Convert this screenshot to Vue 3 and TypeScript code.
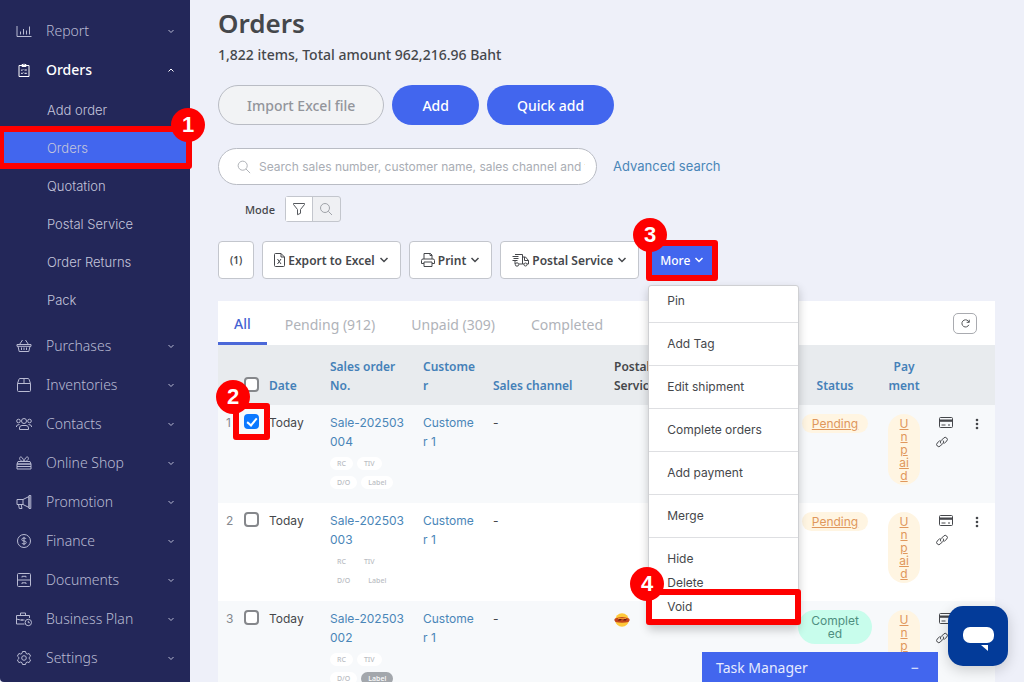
<script setup lang="ts">
import { ref } from 'vue'

interface NavItem {
  label: string
  icon: string
  open?: boolean
  children?: string[]
}

interface OrderRow {
  no: number
  date: string
  order: string
  customer: string
  channel: string
  courier: boolean
  status: string
  done: boolean
  payment: string
  labelled: boolean
}

const nav: NavItem[] = [
  { label: 'Report', icon: 'M1 3v10.500h14.500M4.500 11.500V8.500M7.500 11.500V6M10.500 11.500V7.500M13.500 11.500V3.500' },
  {
    label: 'Orders',
    icon: 'M3 3.500h10v11H3zM6 4.500V2.500h1.200a.9.9 0 0 1 1.600 0H10v2zM5.200 7.800l.8.8 1.200-1.300M8.500 8h2.300M5.200 11l.8.8 1.200-1.300M8.500 11.300h2.300',
    open: true,
    children: ['Add order', 'Orders', 'Quotation', 'Postal Service', 'Order Returns', 'Pack'],
  },
  { label: 'Purchases', icon: 'M1 6.500h14v1.800H1zM2 8.300l1.200 5.200h9.600L14 8.300M3.500 6.500L6.500 2M12.500 6.500L9.500 2M5.500 9.500v2.500M8 9.500v2.500M10.500 9.500v2.500' },
  { label: 'Inventories', icon: 'M1.500 6.500h13v7a1 1 0 0 1-1 1h-11a1 1 0 0 1-1-1zM1.500 6.500L3 2.200Q3.200 1.500 4 1.500h8q.8 0 1 .7l1.500 4.300M8 1.500v5' },
  { label: 'Contacts', icon: 'M8 7.500a2.500 2.500 0 1 0 0-5 2.500 2.500 0 0 0 0 5zM3.500 13.500v-1.500Q3.500 9.500 6 9.500h4q2.500 0 2.500 2.500v1.500zM2.500 6.800a1.800 1.800 0 1 0 0-3.600 1.800 1.800 0 0 0 0 3.600zM13.500 6.800a1.800 1.800 0 1 0 0-3.600 1.800 1.800 0 0 0 0 3.600zM.3 11Q.3 8.500 3.500 8.500M15.700 11q0-2.500-3.200-2.500' },
  { label: 'Online Shop', icon: 'M2 6.500h12l1 2.500H1zM1 9h14v5H1zM1 11.500h14M8 6.500C3 6.500 2.500 1.500 5.200 2 7 2.500 8 6.500 8 6.500S9 2.500 10.800 2C13.500 1.500 13 6.500 8 6.500z' },
  { label: 'Promotion', icon: 'M1 5.500h6v5H1zM7 5.500L13 2.500v11l-6-3M13 1.500h1.800v13H13zM2.500 10.500l.8 4h2.700l-.8-4' },
  { label: 'Finance', icon: 'M8 14.500a6.500 6.500 0 1 0 0-13 6.500 6.500 0 0 0 0 13zM10.200 6Q9.800 5 8 5 5.800 5 5.800 6.500T8 8t2.200 1.500T8 11Q6.200 11 5.800 10M8 3.800v8.400' },
  { label: 'Documents', icon: 'M1.500 2.500a1 1 0 0 1 1-1h11a1 1 0 0 1 1 1v11a1 1 0 0 1-1 1h-11a1 1 0 0 1-1-1zM1.500 8h13M6 5.500V4.300h4v1.200M6 12v-1.200h4V12' },
  { label: 'Business Plan', icon: 'M8.500 13H.5V4.500h13V7M.5 8q4 1.500 8 1M4.500 4.500V2h5v2.500M12.300 14.700a3.200 3.200 0 1 0 0-6.400 3.200 3.200 0 0 0 0 6.400zM12.300 9.800v1.900h1.500M6 8v2' },
  { label: 'Settings', icon: 'M6.500 1.500h3l.5 1.900 1.200.7 1.900-.6 1.500 2.600-1.400 1.300v1.300l1.400 1.300-1.500 2.600-1.900-.6-1.200.7-.5 1.800h-3L6 12.700 4.800 12l-1.900.6L1.400 10l1.400-1.300V7.400L1.400 6.100l1.500-2.600 1.900.6L6 3.400zM8 10.300a2.300 2.300 0 1 0 0-4.600 2.300 2.300 0 0 0 0 4.600z' },
]

const tabs: string[] = ['All', 'Pending (912)', 'Unpaid (309)', 'Completed']

const menuGroups: string[][] = [
  ['Pin'], ['Add Tag'], ['Edit shipment'], ['Complete orders'], ['Add payment'], ['Merge'],
  ['Hide', 'Delete', 'Void'],
]

const rows: OrderRow[] = [
  { no: 1, date: 'Today', order: 'Sale-202503\n004', customer: 'Custome\nr 1', channel: '-', courier: false, status: 'Pending', done: false, payment: 'U\nn\np\nai\nd', labelled: false },
  { no: 2, date: 'Today', order: 'Sale-202503\n003', customer: 'Custome\nr 1', channel: '-', courier: false, status: 'Pending', done: false, payment: 'U\nn\np\nai\nd', labelled: false },
  { no: 3, date: 'Today', order: 'Sale-202503\n002', customer: 'Custome\nr 1', channel: '-', courier: true, status: 'Complet\ned', done: true, payment: 'U\nn\np\nai\nd', labelled: true },
]

const selected = ref<number[]>([1])
const query = ref('')
</script>

<template>
  <div class="app">
    <nav class="sidebar" aria-label="Main">
      <div v-for="item in nav" :key="item.label">
        <button type="button" class="nav-item" :class="{ open: item.open }">
          <svg class="nav-icon" viewBox="0 0 16 16" aria-hidden="true"><path :d="item.icon" /></svg>
          <span class="nav-label">{{ item.label }}</span>
          <svg class="nav-chevron" viewBox="0 0 8 8" aria-hidden="true">
            <path :d="item.open ? 'M1.500 5.500L4 3l2.500 2.500' : 'M1.500 3L4 5.500 6.500 3'" />
          </svg>
        </button>
        <ul v-if="item.children" class="subnav">
          <li v-for="child in item.children" :key="child" :class="{ current: child === 'Orders' }">
            <a href="#">{{ child }}</a>
            <template v-if="child === 'Orders'">
              <span class="frame frame-nav"></span>
              <span class="step step-nav">1</span>
            </template>
          </li>
        </ul>
      </div>
    </nav>

    <main class="content">
      <h1>Orders</h1>
      <p class="summary">1,822 items, Total amount 962,216.96 Baht</p>

      <div class="actions">
        <button type="button" class="pill ghost">Import Excel file</button>
        <button type="button" class="pill">Add</button>
        <button type="button" class="pill">Quick add</button>
      </div>

      <div class="search-row">
        <label class="search">
          <svg class="glass" viewBox="0 0 16 16" aria-hidden="true"><circle cx="6.500" cy="6.500" r="5.200" /><path d="M10.300 10.300L15 15" /></svg>
          <input v-model="query" type="text" aria-label="Search orders" placeholder="Search sales number, customer name, sales channel and tags" />
        </label>
        <a href="#" class="advanced">Advanced search</a>
      </div>

      <div class="mode">
        <span class="mode-label">Mode</span>
        <div class="mode-group">
          <button type="button" class="on" aria-label="Filter mode">
            <svg viewBox="0 0 14 14" aria-hidden="true"><path d="M1.500 1.500h11v1L8.500 7.500v3.800l-3 1.400V7.500L1.500 2.500z" /></svg>
          </button>
          <button type="button" aria-label="Search mode">
            <svg viewBox="0 0 14 14" aria-hidden="true"><circle cx="6" cy="6" r="4.500" /><path d="M9.300 9.300L13 13" /></svg>
          </button>
        </div>
      </div>

      <div class="toolbar">
        <button type="button" class="tool count">(1)</button>
        <button type="button" class="tool">
          <svg class="tool-icon narrow" viewBox="0 0 11 14" aria-hidden="true"><path d="M.5 1.500a1 1 0 0 1 1-1H7L10.500 4v8.500a1 1 0 0 1-1 1h-8a1 1 0 0 1-1-1zM7 .5V4h3.500M3.500 6l3.500 5M7 6l-3.500 5" /></svg>
          <span>Export to Excel</span>
          <svg class="caret" viewBox="0 0 10 8" aria-hidden="true"><path d="M1.500 2L5 5.500 8.500 2" /></svg>
        </button>
        <button type="button" class="tool">
          <svg class="tool-icon" viewBox="0 0 14 14" aria-hidden="true"><path d="M3 6V.5h6.500L11 2v4M9 .5v2h2M3 10.500H.5V7.500Q.5 6 2 6h10q1.500 0 1.500 1.500v3H11M3 9h8v4.500H3z" /></svg>
          <span>Print</span>
          <svg class="caret" viewBox="0 0 10 8" aria-hidden="true"><path d="M1.500 2L5 5.500 8.500 2" /></svg>
        </button>
        <button type="button" class="tool">
          <svg class="tool-icon wide" viewBox="0 0 17 14" aria-hidden="true"><path d="M3 1.500h7.500V11H7M10.500 4h3l3 3.500V11H15M10.500 11h1.500M.5 3.500h6M1.500 5.500h5M.5 7.500h5M3 7.500V11M12.500 4v3.500h4" /><circle cx="5" cy="11.500" r="1.700" /><circle cx="13.500" cy="11.500" r="1.500" /></svg>
          <span>Postal Service</span>
          <svg class="caret" viewBox="0 0 10 8" aria-hidden="true"><path d="M1.500 2L5 5.500 8.500 2" /></svg>
        </button>
        <div class="more">
          <button type="button" class="tool primary" aria-haspopup="menu" aria-expanded="true">
            <span>More</span>
            <svg class="caret" viewBox="0 0 10 8" aria-hidden="true"><path d="M1.500 2L5 5.500 8.500 2" /></svg>
          </button>
          <span class="frame frame-more"></span>
          <span class="step step-more">3</span>
          <div class="menu" role="menu">
            <div v-for="(group, i) in menuGroups" :key="i" class="menu-group">
              <button v-for="entry in group" :key="entry" type="button" role="menuitem" class="menu-item">
                {{ entry }}
              </button>
            </div>
            <span class="frame frame-void"></span>
            <span class="step step-void">4</span>
          </div>
        </div>
      </div>

      <section class="card">
        <div class="tabs">
          <button v-for="(tab, i) in tabs" :key="tab" type="button" class="tab" :class="{ active: i === 0 }">{{ tab }}</button>
          <button type="button" class="refresh" aria-label="Refresh">
            <svg viewBox="0 0 10 10" aria-hidden="true"><path d="M8.700 6.500A4 4 0 1 1 8 2.200L9 3.500M9.200.8v2.900H6.300" /></svg>
          </button>
        </div>
        <table>
          <colgroup>
            <col class="c-no" /><col class="c-check" /><col class="c-date" /><col class="c-order" /><col class="c-customer" />
            <col class="c-channel" /><col class="c-postal" /><col class="c-status" /><col class="c-payment" />
            <col class="c-icons" /><col class="c-dots" />
          </colgroup>
          <thead>
            <tr>
              <th></th>
              <th><input type="checkbox" aria-label="Select all orders" /></th>
              <th>Date</th>
              <th>Sales order<br />No.</th>
              <th>Custome<br />r</th>
              <th>Sales channel</th>
              <th class="dark">Postal<br />Service</th>
              <th class="mid">Status</th>
              <th class="mid">Pay<br />ment</th>
              <th></th>
              <th></th>
            </tr>
          </thead>
          <tbody>
            <tr v-for="row in rows" :key="row.no">
              <td class="no">{{ row.no }}</td>
              <td class="check">
                <input v-model="selected" type="checkbox" :value="row.no" :aria-label="'Select order ' + row.no" />
                <template v-if="row.no === 1">
                  <span class="frame frame-check"></span>
                  <span class="step step-check">2</span>
                </template>
              </td>
              <td>{{ row.date }}</td>
              <td>
                <a href="#" class="lines">{{ row.order }}</a>
                <div class="tags"><span class="tag">RC</span><span class="tag">TIV</span></div>
                <div class="tags"><span class="tag">D/O</span><span class="tag" :class="{ filled: row.labelled }">Label</span></div>
              </td>
              <td><a href="#" class="lines">{{ row.customer }}</a></td>
              <td>{{ row.channel }}</td>
              <td>
                <svg v-if="row.courier" class="courier" viewBox="0 0 16 14" role="img" aria-label="Courier">
                  <circle cx="8" cy="7" r="6.800" fill="#ffc93a" />
                  <path d="M1 5.500Q8 2.500 15 5.500l.8 1.500-1.300 2Q8 10.500 1.500 9L.2 7z" fill="#c4461c" />
                  <path d="M3.500 7.500l2-1.500h2.300L6.500 7.500zM9 7.500L10.300 6h2.500l-1 1.500z" fill="#5e1d10" />
                  <path d="M4 6h8v-.700H4z" fill="#ffb53a" />
                </svg>
              </td>
              <td class="mid"><a href="#" class="badge" :class="{ done: row.done }">{{ row.status }}</a></td>
              <td class="mid"><a href="#" class="badge tall">{{ row.payment }}</a></td>
              <td class="row-icons">
                <button type="button" class="icon-btn" aria-label="Payment">
                  <svg class="bank" viewBox="0 0 14 11" aria-hidden="true"><rect x=".5" y=".5" width="13" height="10" rx="1" /><path d="M0 2.500h14v2.300H0z" class="solid" /><path d="M2.500 8h4M9 8h2" /></svg>
                </button>
                <button type="button" class="icon-btn" aria-label="Copy link">
                  <svg class="chain" viewBox="0 0 12 12" aria-hidden="true"><path d="M5 7.500a2 2 0 0 1 0-2.800L7.700 2a2.100 2.100 0 0 1 3 0 2.100 2.100 0 0 1 0 3L8 7.700M7 4.500a2 2 0 0 1 0 2.800L4.300 10a2.100 2.100 0 0 1-3 0 2.100 2.100 0 0 1 0-3L4 4.300" /></svg>
                </button>
              </td>
              <td>
                <button type="button" class="icon-btn dots" aria-label="Row actions">
                  <svg viewBox="0 0 4 12" aria-hidden="true"><circle cx="2" cy="2" r="1.300" /><circle cx="2" cy="6" r="1.300" /><circle cx="2" cy="10" r="1.300" /></svg>
                </button>
              </td>
            </tr>
          </tbody>
        </table>
      </section>
    </main>

    <button type="button" class="tasks"><span>Task Manager</span><span>−</span></button>
    <button type="button" class="chat" aria-label="Open chat">
      <svg viewBox="0 0 60 60" aria-hidden="true">
        <rect x="15" y="21" width="31" height="16" rx="7" />
        <path d="M33 39h7v6z" />
      </svg>
    </button>
  </div>
</template>

<style>
body {
  margin: 0;
}
</style>

<style scoped>
.app {
  --blue: #4266ee;
  --link: #4a86b8;
  --red: #fe0000;
  position: relative;
  display: flex;
  height: 100vh;
  overflow: hidden;
  background: #eef0f9;
  color: #45474b;
  font-family: "Noto Sans", "Open Sans", sans-serif;
  font-size: 13px;
  line-height: 19px;
}
.app * {
  box-sizing: border-box;
}
button {
  padding: 0;
  border: 0;
  background: none;
  color: inherit;
  font: inherit;
  cursor: pointer;
}
svg {
  display: block;
  fill: none;
  stroke: currentColor;
  flex: none;
}
a {
  color: var(--link);
  text-decoration: none;
}

.sidebar {
  flex: 0 0 190px;
  padding-top: 11px;
  background: #232759;
  border-bottom-left-radius: 4px;
  color: #b9bbd3;
}
.nav-item {
  display: flex;
  align-items: center;
  width: 100%;
  height: 39px;
  padding: 0 15px 0 16px;
  font-family: "Noto Sans", sans-serif;
  font-size: 14px;
  font-weight: 300;
  text-align: left;
}
.nav-item.open {
  color: #fff;
  font-weight: 500;
}
.nav-icon {
  width: 16px;
  height: 16px;
  margin-right: 14px;
}
.nav-label {
  flex: 1;
}
.nav-chevron {
  width: 8px;
  height: 8px;
}
.subnav {
  margin: 0;
  padding: 2px 0 7px;
  list-style: none;
}
.subnav li {
  position: relative;
}
.subnav a {
  display: block;
  padding-left: 47px;
  color: #c3c5db;
  font-family: Inter, sans-serif;
  font-size: 13px;
  font-weight: 300;
  line-height: 38px;
}
.subnav .current {
  background: var(--blue);
}

.frame {
  position: absolute;
  border: 6px solid var(--red);
  border-radius: 3px;
  pointer-events: none;
}
.step {
  position: absolute;
  width: 34px;
  height: 34px;
  border-radius: 50%;
  background: var(--red);
  color: #fff;
  font: bold 22px/34px "Liberation Sans", Arial, sans-serif;
  text-align: center;
}
.frame-nav {
  inset: -3px -2px -2px;
}
.step-nav {
  top: -21px;
  right: -15px;
}
.frame-more {
  inset: -1px -1px -2px;
}
.step-more {
  top: -23px;
  left: -14px;
}
.frame-void {
  inset: auto -3px 0 -3px;
  height: 36px;
}
.step-void {
  bottom: 24px;
  left: -19px;
}
.frame-check {
  top: -2px;
  left: -11px;
  width: 37px;
  height: 37px;
}
.step-check {
  top: -25px;
  left: -28px;
}

.content {
  flex: 1;
  min-width: 0;
  padding: 5px 29px 0 28px;
}
h1 {
  margin: 0;
  font-size: 26px;
  font-weight: 600;
  line-height: 36px;
}
.summary {
  margin: 4px 0 20px;
  font-size: 14px;
  font-weight: 500;
  line-height: 20px;
}
.actions {
  display: flex;
  gap: 8px;
}
.pill {
  height: 40px;
  padding: 0 30px;
  border-radius: 20px;
  background: var(--blue);
  color: #fff;
  font-size: 14px;
  font-weight: 500;
}
.pill.ghost {
  padding: 0 28px;
  border: 1px solid #b9bcc4;
  background: #f2f3f5;
  color: #92959b;
}
.search-row {
  display: flex;
  align-items: center;
  gap: 16px;
  margin-top: 23px;
}
.search {
  display: flex;
  align-items: center;
  flex: 0 1 379px;
  height: 37px;
  padding: 0 11px 0 18px;
  border: 1px solid #b9bcc4;
  border-radius: 19px;
  background: #fff;
}
.glass {
  width: 14px;
  height: 14px;
  margin-right: 8px;
  color: #a5a8ae;
}
.search input {
  flex: 1;
  min-width: 0;
  padding: 0;
  border: 0;
  outline: 0;
  background: none;
  color: inherit;
  font: 12px/19px Inter, sans-serif;
}
.search input::placeholder {
  color: #a9adb4;
}
.advanced {
  font-family: Inter, sans-serif;
}
.mode {
  display: flex;
  align-items: center;
  gap: 10px;
  margin: 11px 0 19px 27px;
}
.mode-label {
  font-size: 11px;
  font-weight: 500;
}
.mode-group {
  display: flex;
  border: 1px solid #c3c6cd;
  border-radius: 3px;
  background: #eff0f3;
}
.mode-group button {
  display: grid;
  place-items: center;
  width: 27px;
  height: 24px;
  color: #a0a3a9;
}
.mode-group .on {
  border-right: 1px solid #c3c6cd;
  background: #fff;
  color: #55585d;
}
.mode-group svg {
  width: 14px;
  height: 14px;
}

.toolbar {
  display: flex;
  gap: 8px;
}
.tool {
  display: flex;
  align-items: center;
  gap: 3px;
  height: 38px;
  padding: 0 11px;
  border: 1px solid #c3c6cd;
  border-radius: 4px;
  background: #fff;
  font-size: 12px;
  font-weight: 600;
  white-space: nowrap;
}
.tool.count {
  font-size: 10px;
}
.tool.primary {
  border-color: var(--blue);
  background: var(--blue);
  color: #fff;
  font-weight: 500;
  padding: 0 12px;
}
.tool-icon {
  width: 14px;
  height: 14px;
}
.tool-icon.narrow {
  width: 11px;
}
.tool-icon.wide {
  width: 17px;
}
.caret {
  width: 10px;
  height: 8px;
  margin-left: 1px;
  stroke-width: 1.500;
}
.more {
  position: relative;
  z-index: 2;
}
.menu {
  position: absolute;
  top: 44px;
  left: 1px;
  width: 151px;
  padding: 3px 0 6px;
  border: 1px solid #cfd0d3;
  border-radius: 3px;
  background: #fff;
  box-shadow: 0 4px 10px rgba(0, 0, 0, 0.2);
}
.menu-group + .menu-group {
  margin-top: 9px;
  padding-top: 9px;
  border-top: 1px solid #dedfe2;
}
.menu-item {
  display: block;
  width: 100%;
  padding: 0 18px;
  font-family: Inter, sans-serif;
  font-size: 12px;
  line-height: 24px;
  text-align: left;
  white-space: nowrap;
}

.card {
  margin-top: 22px;
  background: #fff;
}
.tabs {
  display: flex;
  align-items: center;
  height: 44px;
  padding-right: 18px;
}
.tab {
  align-self: stretch;
  padding: 3px 18px 0;
  color: #b0b3b9;
  font-size: 14px;
  white-space: nowrap;
}
.tab.active {
  padding: 3px 16px 0;
  border-bottom: 3px solid #4b68d8;
  color: #4462d2;
  font-weight: 500;
}
.refresh {
  display: grid;
  place-items: center;
  width: 24px;
  height: 21px;
  margin-left: auto;
  border: 1px solid #a9abb0;
  border-radius: 5px;
}
.refresh svg {
  width: 9px;
  height: 9px;
}

table {
  width: 100%;
  border-collapse: collapse;
  table-layout: fixed;
}
.c-no { width: 26px; }
.c-check { width: 25px; }
.c-date { width: 61px; }
.c-order { width: 93px; }
.c-customer { width: 70px; }
.c-channel { width: 121px; }
.c-status { width: 80px; }
.c-payment { width: 58px; }
.c-icons { width: 32px; }
.c-dots { width: 30px; }
th {
  height: 60px;
  padding: 0 0 10px;
  background: #e8ebee;
  color: #4480b8;
  font-size: 12px;
  font-weight: 600;
  text-align: left;
  vertical-align: bottom;
  white-space: nowrap;
}
th.dark {
  color: #45474b;
}
.mid {
  text-align: center;
}
td {
  position: relative;
  height: 98px;
  padding: 8px 0 0;
  font-family: Inter, sans-serif;
  font-size: 12px;
  vertical-align: top;
}
tbody tr:nth-child(odd) {
  background: #f7f9fb;
}
.no {
  padding-left: 8px;
  color: #85888e;
}
.check {
  padding-top: 9px;
}
.lines,
.badge {
  white-space: pre-line;
}
input[type='checkbox'] {
  position: relative;
  display: block;
  width: 15px;
  height: 15px;
  margin: 0 0 3px;
  appearance: none;
  border: 2px solid #85878b;
  border-radius: 4px;
  background: #fff;
}
input[type='checkbox']:checked {
  border-color: #0b78ff;
  background: #0b78ff;
}
input[type='checkbox']:checked::after {
  content: '';
  position: absolute;
  top: 0;
  left: 3px;
  width: 4px;
  height: 8px;
  border: solid #fff;
  border-width: 0 2px 2px 0;
  transform: rotate(40deg);
}
.tags {
  display: flex;
  gap: 4px;
  margin-top: 6px;
}
.tag {
  padding: 0 7px;
  border-radius: 7px;
  background: #fff;
  color: #babdc3;
  font: 500 7px/13px "Noto Sans", sans-serif;
}
.tag.filled {
  background: #a3a7ac;
  color: #fff;
}
.courier {
  width: 16px;
  height: 14px;
  margin-top: 4px;
  stroke: none;
}
.badge {
  display: inline-block;
  margin-top: 1px;
  padding: 3px 10px;
  border-radius: 12px;
  background: #fff5e2;
  color: #e0975c;
  line-height: 13px;
  text-decoration: underline;
}
.badge.tall {
  padding: 3px 11px;
  border-radius: 16px;
}
.badge.done {
  padding: 4px 13px;
  border-radius: 17px;
  background: #c8fdec;
  color: #4f8f80;
  text-decoration: none;
}
.icon-btn {
  display: block;
}
.row-icons {
  padding: 12px 0 0 6px;
}
.bank {
  width: 14px;
  height: 11px;
}
.bank .solid {
  fill: currentColor;
  stroke: none;
}
.chain {
  width: 12px;
  height: 12px;
  margin: 8px 0 0 -3px;
}
.dots {
  margin: 5px 0 0 10px;
}
.dots svg {
  width: 4px;
  height: 12px;
  fill: currentColor;
  stroke: none;
}

.tasks {
  position: absolute;
  z-index: 3;
  right: 86px;
  bottom: 0;
  display: flex;
  align-items: center;
  justify-content: space-between;
  width: 236px;
  height: 30px;
  padding: 0 19px 0 14px;
  background: var(--blue);
  color: #e6ebff;
  font-size: 14px;
}
.chat {
  position: absolute;
  z-index: 3;
  right: 16px;
  bottom: 16px;
  width: 60px;
  height: 60px;
  border-radius: 15px;
  background: #033b99;
  box-shadow: 0 4px 14px rgba(0, 0, 0, 0.18);
}
.chat svg {
  fill: #fff;
  stroke: none;
}
</style>
